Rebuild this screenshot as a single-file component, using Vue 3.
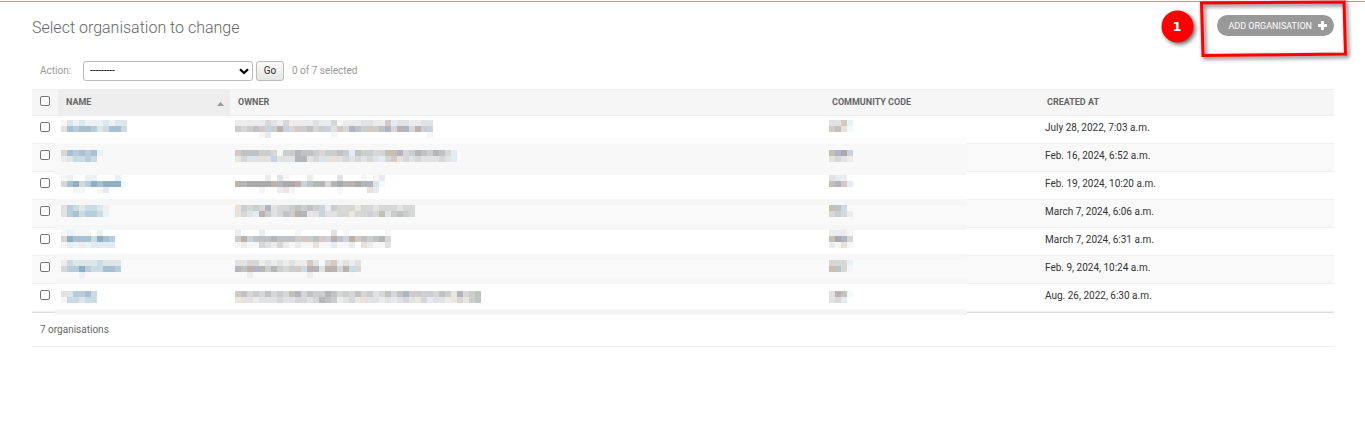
<script setup>
import { ref } from 'vue'

const action = ref('')
const checked = ref([])

const palette = {
  a: '#f6f6f6', b: '#ececec', c: '#e1e2e3', d: '#d7d7d8', e: '#cccdcd', f: '#c1c2c3', g: '#b5b6b7', h: '#aaaaaa',
  1: '#ebf2f5', 2: '#dce7ec', 3: '#cbdbe4', 4: '#b8cdd9', 5: '#a8c0d0', 6: '#90aec4',
  w: '#e8e1dc', v: '#d3cac5', u: '#bbb1ad', p: '#e6eaf3', q: '#cbd2de', r: '#b0b5bf', y: '#e9e7df', k: '#c4c0b5', z: '#effafd'
}

const rows = [
  {
    id: 1, date: 'July 28, 2022, 7:03 a.m.', top: 4,
    name: ['a2121112122', 'c5455423553'],
    owner: ['bbbbbdcbdbbbbcbbdabbbccbbvpccbbcc', 'edefvqeuqdvefdeqcvdrfevefrdurdueq', '....ap..........a...............a'],
    code: ['ccv1', 'vfwz']
  },
  {
    id: 2, date: 'Feb. 16, 2024, 6:52 a.m.', top: 6,
    name: ['d545451', 'b23343'],
    owner: ['vfffeedaeegffedeefepfeeddkkrdegfegfdp', 'ydccwcqcccrgcdccwcdcdcdcpdvwdcdcccdcp'],
    code: ['krhq', 'cdcb']
  },
  {
    id: 3, date: 'Feb. 19, 2024, 10:20 a.m.', top: 3,
    name: ['a1..11...1', 'd563465666z', '..aa..ap'],
    owner: ['.....b.ca...b....c...a.ap', 'urhhhhughhuqfggdghguhgrcz', '....a..bya.......a....wp'],
    code: ['cpb', 'krvp']
  },
  {
    id: 4, date: 'March 7, 2024, 6:06 a.m.', top: 5,
    name: ['c4323321', 'c4534431'],
    owner: ['wededrcddefefeqbedddyddcdddcdd', 'wdcpuecdfvurycqccddyddqdkcefed'],
    code: ['kf3', 'dedb']
  },
  {
    id: 5, date: 'March 7, 2024, 6:31 a.m.', top: 2,
    name: ['a1aaa.1', 'd65553654', 'ab1b1pppp'],
    owner: ['b...b.....a.....c.a......a', 'euqfffgfffevefvqufquvfefgd', 'abaadcbdbabaawaapaab.wbaac'],
    code: ['bbba', 'khrd', 'bawa']
  },
  {
    id: 6, date: 'Feb. 9, 2024, 10:24 a.m.', top: 4,
    name: ['b322223222', 'd446433554', '...1'],
    owner: ['ccddbcbcbcbbvcadvbcbc', 'gfurgegedev3ugcuudu3d', '..b.........b......a.'],
    code: ['ddd1', 'kfda']
  },
  {
    id: 7, date: 'Aug. 26, 2022, 6:30 a.m.', top: 7,
    name: ['c24453', 'a33233'],
    owner: ['vfdedfdedkrdfeegfdedfdecdfdfrevqedfeyrdef', 'ywcbcccdccddcdgfebcdywccbcpcdcydpccbydyef'],
    code: ['cufz', 'cdp']
  }
]

const columns = ['name', 'owner', 'code']

function tiles(row, key) {
  return row[key].flatMap((line, y) =>
    [...line].map((c, x) => ({ x: x * 6, y: row.top + y * 6, fill: palette[c] })).filter((t) => t.fill)
  )
}

function toggleAll(event) {
  checked.value = event.target.checked ? rows.map((r) => r.id) : []
}
</script>

<template>
  <main class="page">
    <header class="heading">
      <h1>Select organisation to change</h1>
      <a class="add" href="#">
        Add organisation
        <svg width="9" height="9" viewBox="0 0 9 9" aria-hidden="true"><path d="M3 0h3v3h3v3H6v3H3V6H0V3h3z" fill="#fff" /></svg>
      </a>
      <svg class="callout" width="205" height="76" viewBox="0 0 205 76" aria-hidden="true">
        <g class="raised">
          <path d="M41.500 3L184 2L185.500 54L43 55.500Z" fill="none" stroke="#f00" stroke-width="3" />
          <circle cx="17.500" cy="26.500" r="16" fill="#f00" />
        </g>
        <text x="17" y="31" text-anchor="middle">1</text>
      </svg>
    </header>

    <form class="changelist" @submit.prevent>
      <div class="actions">
        <label for="action">Action:</label>
        <div class="picker">
          <select id="action" v-model="action">
            <option value="">---------</option>
            <option value="delete">Delete selected organisations</option>
          </select>
          <svg width="10" height="7" viewBox="0 0 10 7" aria-hidden="true"><path d="M1 1.200L5 5L9 1.200" fill="none" stroke="#000" stroke-width="2.200" /></svg>
        </div>
        <button type="submit">Go</button>
        <span class="count">{{ checked.length }} of 7 selected</span>
      </div>

      <table>
        <colgroup>
          <col class="c-check" /><col class="c-name" /><col /><col class="c-code" /><col class="c-date" />
        </colgroup>
        <thead>
          <tr>
            <th><input type="checkbox" aria-label="Select all organisations" @change="toggleAll" /></th>
            <th class="sorted">
              <div class="sort">Name<svg width="7" height="4" viewBox="0 0 7 4" aria-hidden="true"><path d="M0 4L3.500 0L7 4z" fill="#999" /></svg></div>
            </th>
            <th>Owner</th>
            <th>Community code</th>
            <th>Created at</th>
          </tr>
        </thead>
        <tbody>
          <tr v-for="row in rows" :key="row.id" :class="'band-' + row.id">
            <td class="check"><input v-model="checked" type="checkbox" :value="row.id" :aria-label="'Select organisation ' + row.id" /></td>
            <td v-for="key in columns" :key="key" class="masked" :class="key">
              <svg class="mosaic" width="250" height="28" aria-hidden="true" shape-rendering="crispEdges">
                <rect v-for="(t, i) in tiles(row, key)" :key="i" :x="t.x" :y="t.y" width="6" height="6" :fill="t.fill" />
              </svg>
            </td>
            <td class="date">{{ row.date }}</td>
          </tr>
        </tbody>
      </table>
      <p class="paginator">7 organisations</p>
    </form>
  </main>
</template>

<style>
body {
  background: #fff;
}
</style>

<style scoped>
.page {
  margin-top: 1px;
  border-top: 1px solid #79aec8;
  padding: 13px 31px 40px 32px;
  font-family: Roboto, "Liberation Sans", sans-serif;
  font-size: 10px;
  color: #333;
}
.heading {
  position: relative;
  display: flex;
  justify-content: space-between;
  align-items: flex-start;
}
h1 {
  margin: 0;
  font-size: 16px;
  line-height: 26px;
  font-weight: 300;
  color: #666;
}
.add {
  display: flex;
  align-items: center;
  gap: 6px;
  box-sizing: border-box;
  height: 21px;
  padding: 0 7px 0 11px;
  border-radius: 11px;
  background: #999;
  color: #fff;
  font-size: 9px;
  text-transform: uppercase;
  text-decoration: none;
}
.callout {
  position: absolute;
  top: -15px;
  right: -31px;
  pointer-events: none;
}
.callout text {
  font: bold 13px "DejaVu Sans", sans-serif;
  fill: #fff;
}
.raised {
  filter: drop-shadow(2px 2px 2px rgba(0, 0, 0, 0.6));
}
.changelist {
  margin-top: 19px;
}
.actions {
  display: flex;
  align-items: center;
  height: 21px;
  padding-left: 8px;
  color: #999;
}
.actions label {
  width: 32px;
}
.picker {
  position: relative;
  width: 170px;
  margin-left: 11px;
}
.picker svg {
  position: absolute;
  right: 4px;
  top: 7px;
  pointer-events: none;
}
select {
  display: block;
  appearance: none;
  box-sizing: border-box;
  width: 100%;
  height: 20px;
  margin: 0;
  padding: 0 6px;
  border: 1px solid #bbb;
  border-radius: 3px;
  background: #fff;
  color: #000;
  font: 10px Roboto, sans-serif;
}
button {
  box-sizing: border-box;
  width: 28px;
  height: 20px;
  margin: 0 8px 0 3px;
  padding: 0;
  border: 1px solid #bbb;
  border-radius: 3px;
  background: linear-gradient(#fafafa, #e6e6e6);
  color: #333;
  font: 10px Roboto, sans-serif;
}
table {
  width: 100%;
  margin-top: 8px;
  table-layout: fixed;
  border-collapse: separate;
  border-spacing: 0;
}
.c-check { width: 26px; }
.c-name { width: 172px; }
.c-code { width: 215px; }
.c-date { width: 295px; }
th {
  box-sizing: border-box;
  height: 27px;
  padding: 0 8px 2px;
  border-top: 1px solid #eee;
  border-bottom: 1px solid #eee;
  background: #f6f6f6;
  color: #666;
  font-size: 9px;
  font-weight: 700;
  line-height: 12px;
  text-align: left;
  text-transform: uppercase;
}
th.sorted {
  background: #eee;
}
.sort {
  display: flex;
  justify-content: space-between;
  align-items: center;
}
.sort svg {
  margin: 5px -2px 0 0;
}
input {
  display: block;
  appearance: none;
  box-sizing: border-box;
  width: 10px;
  height: 10px;
  margin: 0;
  border: 1px solid #767676;
  border-radius: 2px;
  background: #fff;
}
input:checked {
  background: #79aec8;
}
th input {
  margin-top: -1px;
}
td {
  box-sizing: border-box;
  height: 28px;
  padding: 0;
}
tbody tr:nth-child(even) {
  background: #f9f9f9;
}
td.check {
  padding: 6px 8px 0;
  vertical-align: top;
  background:
    linear-gradient(#eee, #eee) 0 100% / 23px 1px no-repeat,
    var(--band) 100% 0 / 3px 100% no-repeat;
}
td.masked {
  overflow: hidden;
  background: var(--band);
}
td.name { padding-left: 3px; }
td.owner { padding-left: 5px; }
td.code {
  padding-left: 5px;
  background:
    var(--band) 0 0 / 143px 100% no-repeat,
    linear-gradient(#eee, #eee) 0 100% / 100% 1px no-repeat;
}
td.date {
  padding: 0 6px 4px;
  border-bottom: 1px solid #eee;
}
.mosaic {
  display: block;
}
.band-1 { --band: linear-gradient(#fff 22px, #fcfcfc 22px); }
.band-2 { --band: linear-gradient(#f8f8f8, #f8f8f8); }
.band-3 { --band: linear-gradient(#f8f8f8 3px, #fff 3px 21px, #fdfdfd 21px 27px, #f6f6f6 27px); }
.band-4 { --band: linear-gradient(#f6f6f6 5px, #f9f9f9 5px 25px, #f6f6f6 25px); }
.band-5 { --band: linear-gradient(#f6f6f6 2px, #fff 2px 26px, #f7f7f7 26px); }
.band-6 { --band: linear-gradient(#f7f7f7 4px, #f9f9f9 4px 22px, #f7f7f7 22px); }
.band-7 { --band: linear-gradient(#fff 25px, #f5f5f5 25px); }
.paginator {
  box-sizing: border-box;
  height: 35px;
  margin: 0;
  padding: 0 8px;
  border-bottom: 1px solid #eee;
  background:
    linear-gradient(#f5f5f5, #f5f5f5) 23px 0 / calc(100% - 390px) 3px no-repeat,
    linear-gradient(#ddd, #ddd) 0 0 / 100% 1px no-repeat;
  color: #666;
  line-height: 35px;
}
</style>
